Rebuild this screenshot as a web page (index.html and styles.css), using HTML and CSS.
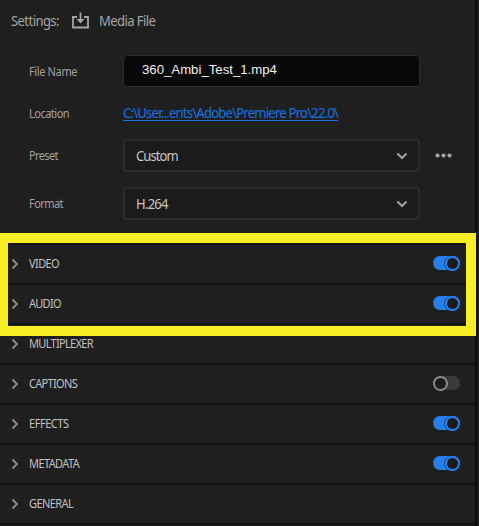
FILE: index.html
```
<!DOCTYPE html>
<html lang="en">
<head>
<meta charset="utf-8">
<title>Export settings</title>
<link rel="stylesheet" href="styles.css">
</head>
<body>
<main class="panel">
  <header class="header">
    <span class="title">Settings:</span>
    <svg class="import" width="17" height="17" viewBox="0 0 17 17"><path d="M5 5H1v10.500h15V5h-4" fill="none" stroke="#a5a5a5" stroke-width="1.800"/><path d="M8.500 0.500v8" stroke="#a5a5a5" stroke-width="1.800"/><path d="M4.500 7h8l-4 4.500z" fill="#a5a5a5"/></svg>
    <span class="kind">Media File</span>
  </header>
  <section class="form">
    <div class="field name"><span class="label l-name">File Name</span><div class="input">360_Ambi_Test_1.mp4</div></div>
    <div class="field location"><span class="label l-location">Location</span><a class="path">C:\User...ents\Adobe\Premiere Pro\22.0\</a></div>
    <div class="field preset"><span class="label l-preset">Preset</span><div class="select"><span class="custom">Custom</span><svg width="12" height="8" viewBox="0 0 12 8"><path class="chevron" d="M1.500 1.500L6 6l4.500-4.500"/></svg></div><svg class="more" width="17" height="5" viewBox="0 0 17 5"><circle cx="2.500" cy="2.500" r="2.100"/><circle cx="8.500" cy="2.500" r="2.100"/><circle cx="14.500" cy="2.500" r="2.100"/></svg></div>
    <div class="field format"><span class="label l-format">Format</span><div class="select"><span class="codec">H.264</span><svg width="12" height="8" viewBox="0 0 12 8"><path class="chevron" d="M1.500 1.500L6 6l4.500-4.500"/></svg></div></div>
  </section>
  <section class="groups">
    <div class="row"><svg class="arrow" width="8" height="12" viewBox="0 0 8 12"><path class="chevron" d="M1.500 1.500L6 6l-4.500 4.500"/></svg><span class="video">VIDEO</span><i class="toggle on"></i></div>
    <div class="row"><svg class="arrow" width="8" height="12" viewBox="0 0 8 12"><path class="chevron" d="M1.500 1.500L6 6l-4.500 4.500"/></svg><span class="audio">AUDIO</span><i class="toggle on"></i></div>
    <div class="row"><svg class="arrow" width="8" height="12" viewBox="0 0 8 12"><path class="chevron" d="M1.500 1.500L6 6l-4.500 4.500"/></svg><span class="multiplexer">MULTIPLEXER</span></div>
    <div class="row"><svg class="arrow" width="8" height="12" viewBox="0 0 8 12"><path class="chevron" d="M1.500 1.500L6 6l-4.500 4.500"/></svg><span class="captions">CAPTIONS</span><i class="toggle"></i></div>
    <div class="row"><svg class="arrow" width="8" height="12" viewBox="0 0 8 12"><path class="chevron" d="M1.500 1.500L6 6l-4.500 4.500"/></svg><span class="effects">EFFECTS</span><i class="toggle on"></i></div>
    <div class="row"><svg class="arrow" width="8" height="12" viewBox="0 0 8 12"><path class="chevron" d="M1.500 1.500L6 6l-4.500 4.500"/></svg><span class="metadata">METADATA</span><i class="toggle on"></i></div>
    <div class="row"><svg class="arrow" width="8" height="12" viewBox="0 0 8 12"><path class="chevron" d="M1.500 1.500L6 6l-4.500 4.500"/></svg><span class="general">GENERAL</span></div>
  </section>
  <div class="highlight"></div>
</main>
</body>
</html>
```
FILE: styles.css
```
*, *::after { box-sizing: border-box; }
body { margin: 0; background: #1b1b1b; font-family: "Noto Sans", "Open Sans", sans-serif; overflow: hidden; }
svg { display: block; flex: none; }
span, a { white-space: nowrap; transform-origin: left center; }
.panel { position: relative; width: 477px; height: 526px; background: #1f1f1f; border-right: 2px solid #0b0b0b; }
.header { display: flex; align-items: center; height: 41px; padding-left: 11px; font-size: 14px; color: #a5a5a5; }
.header span, .select span { transform: scaleX(0.929); }
.title { width: 61px; letter-spacing: -0.6px; }
.kind { margin-left: 10px; letter-spacing: -0.6px; }
.form { height: 202px; padding-top: 14px; }
.field { display: flex; align-items: center; height: 33px; padding-left: 29px; }
.name { height: 32px; }
.label { width: 94px; flex: none; font-size: 12px; color: #a0a0a0; transform: scaleX(0.917); }
.l-name { letter-spacing: -0.4px; }
.l-location { letter-spacing: -0.55px; }
.l-preset { letter-spacing: -0.7px; }
.l-format { letter-spacing: -0.6px; }
.input { width: 297px; height: 32px; padding-left: 18px; border: 1px solid #2d2d2d; border-radius: 4px; background: #080808; color: #f0f0f0; font: 13.2px/28px "Liberation Sans", sans-serif; }
.location { height: 52px; }
.path { color: #1573e6; font-size: 14px; letter-spacing: -0.8px; line-height: 16px; text-decoration: underline; text-underline-offset: 2px; transform: scaleX(0.929); }
.select { display: flex; align-items: center; justify-content: space-between; width: 297px; height: 33px; padding: 0 10px 0 11px; border: 2px solid #2b2b2b; border-radius: 4px; background: #1b1b1b; color: #c8c8c8; font-size: 14px; }
.custom { letter-spacing: -1px; }
.codec { letter-spacing: -0.8px; }
.more { margin-left: 15px; fill: #a5a5a5; }
.preset { height: 33px; }
.format { margin-top: 15px; }
.chevron { fill: none; stroke: #a5a5a5; stroke-width: 2; }
.groups { border-top: 2px solid #131313; }
.row { display: flex; align-items: center; height: 40px; padding: 0 15px 2px 11px; border-bottom: 2px solid #131313; color: #c0c0c0; font-size: 12px; }
.row span { transform: scaleX(0.917); }
.arrow { margin: 2px 10px 0 0; }
.arrow .chevron { stroke: #8b8b8b; }
.video { letter-spacing: -0.65px; }
.audio { letter-spacing: -0.8px; }
.multiplexer { letter-spacing: -0.75px; }
.captions { letter-spacing: -0.75px; }
.effects { letter-spacing: -0.5px; }
.metadata { letter-spacing: -0.65px; }
.general { letter-spacing: -0.65px; }
.toggle { position: relative; width: 27px; height: 14px; margin-left: auto; border-radius: 7px; background: #3a3a3a; }
.toggle::after { content: ""; position: absolute; top: 0; left: 0; width: 15px; height: 15px; border: 2px solid #8a8a8a; border-radius: 50%; background: #1b1b1b; }
.toggle.on { background: #2680eb; }
.toggle.on::after { left: 12px; border-color: #2680eb; box-shadow: -1px 0 0 #184f8f; }
.highlight { position: absolute; left: 0; top: 233px; width: 476px; height: 103px; border: 10px solid #faee25; border-left-width: 8px; }
```
